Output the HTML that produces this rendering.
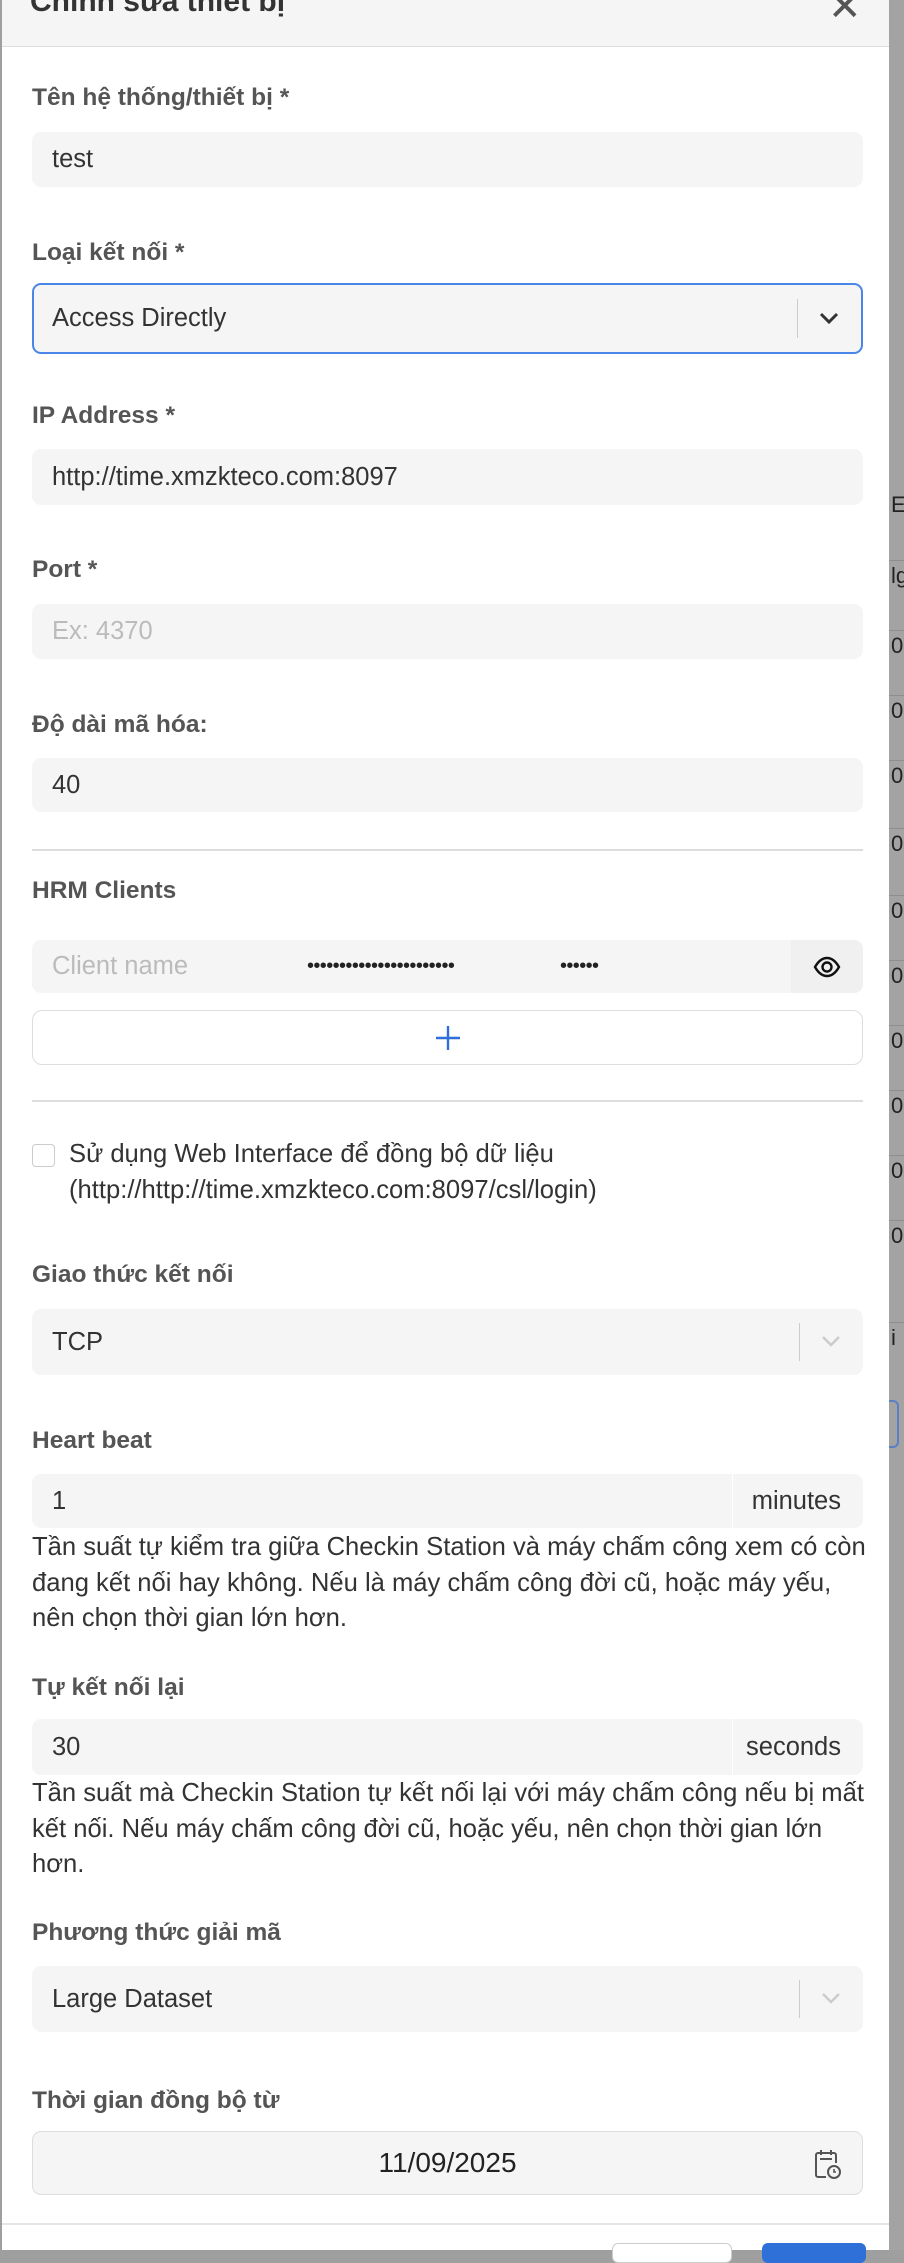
<!DOCTYPE html>
<html><head><meta charset="utf-8"><style>
*{box-sizing:border-box;margin:0;padding:0}
body{width:904px;height:2250px;overflow:hidden;background:#9f9f9f;font-family:"Liberation Sans",Arial,sans-serif;position:relative}
.strip{position:absolute;left:889px;top:0;width:15px;height:2250px;background:#a3a3a3}
.strip div{position:absolute;left:0;width:15px;border-top:1px solid #8e8e8e;color:#222;font-size:22px;line-height:30px;padding-left:2px}
.modal{position:absolute;left:2px;top:0;width:887px;height:2250px;background:#fff}
.hdr{position:absolute;left:0;top:0;width:887px;height:47px;background:#f5f5f5;border-bottom:1px solid #ddd}
.hdr .t{position:absolute;left:28px;top:-15px;font-size:30px;font-weight:bold;color:#333}
.hdr .x{position:absolute;left:826px;top:-16px;font-size:40px;color:#555;font-weight:300}
.lbl{position:absolute;left:30px;font-size:24.5px;font-weight:bold;color:#555;transform:translateY(-50%)}
.inp{position:absolute;left:30px;width:831px;background:#f5f5f5;border-radius:9px;font-size:25.5px;color:#333;padding-left:20px;display:flex;align-items:center}
.sep{position:absolute;right:63px;top:14px;bottom:14px;width:1px;background:#ccc}
.chev{position:absolute;right:22px;top:50%;margin-top:-8px}
.help{position:absolute;left:30px;font-size:25.6px;color:#333;line-height:35.5px;width:850px}
.hr{position:absolute;left:30px;width:831px;height:2px;background:#ddd}
.addon{position:absolute;right:0;top:0;bottom:0;width:131px;border-left:1px solid #fff;display:flex;align-items:center;justify-content:flex-end;padding-right:22px}
</style></head><body>
<div class="strip">
<div style="top:490px;border:none">E</div>
<div style="top:560px">lg</div>
<div style="top:630px">0</div><div style="top:695px">0</div><div style="top:760px">0</div><div style="top:828px">0</div><div style="top:895px">0</div><div style="top:960px">0</div><div style="top:1025px">0</div><div style="top:1090px">0</div><div style="top:1155px">0</div><div style="top:1220px">0</div>
<div style="top:1322px">i</div>
<div style="top:1400px;height:48px;border:2px solid #5b7ec4;border-left:none;width:10px;border-radius:0 6px 6px 0"></div>
</div>
<div class="modal">
<div class="hdr"><div class="t">Chỉnh sửa thiết bị</div><div class="x">✕</div></div>

<div class="lbl" style="top:98px">Tên hệ thống/thiết bị *</div>
<div class="inp" style="top:132px;height:55px">test</div>

<div class="lbl" style="top:253px">Loại kết nối *</div>
<div class="inp" style="top:283px;height:71px;border:2px solid #4a86e8;padding-left:18px">Access Directly<div class="sep"></div>
<svg class="chev" width="20" height="14" viewBox="0 0 20 14"><path d="M2 3l8 8 8-8" fill="none" stroke="#333" stroke-width="3"/></svg></div>

<div class="lbl" style="top:416px">IP Address *</div>
<div class="inp" style="top:449px;height:56px">http://time.xmzkteco.com:8097</div>

<div class="lbl" style="top:570px">Port *</div>
<div class="inp" style="top:604px;height:55px;color:#bbb">Ex: 4370</div>

<div class="lbl" style="top:725px">Độ dài mã hóa:</div>
<div class="inp" style="top:758px;height:54px">40</div>

<div class="hr" style="top:849px"></div>
<div class="lbl" style="top:891px">HRM Clients</div>
<div class="inp" style="top:940px;height:53px;color:#bbb">Client name
<span style="position:absolute;left:275px;color:#222;font-size:20px;letter-spacing:-0.6px">•••••••••••••••••••••••</span>
<span style="position:absolute;left:528px;color:#222;font-size:20px;letter-spacing:-0.6px">••••••</span>
<div style="position:absolute;right:0;top:0;bottom:0;width:72px;background:#f0f0f0;border-radius:0 9px 9px 0"></div>
<svg style="position:absolute;right:22px;top:16px" width="28" height="22" viewBox="0 0 28 22"><path d="M2 11C6 4 10 2 14 2s8 2 12 9c-4 7-8 9-12 9S6 18 2 11z" fill="none" stroke="#111" stroke-width="2.4"/><circle cx="14" cy="11" r="4.5" fill="none" stroke="#111" stroke-width="2.4"/></svg></div>
<div style="position:absolute;left:30px;top:1010px;width:831px;height:55px;border:1.5px solid #ddd;border-radius:10px;background:#fff">
<svg style="position:absolute;left:403px;top:15px" width="24" height="24" viewBox="0 0 24 24"><path d="M12 0v24M0 12h24" stroke="#2f6fd8" stroke-width="2.4"/></svg></div>
<div class="hr" style="top:1100px"></div>

<div style="position:absolute;left:30px;top:1144px;width:23px;height:23px;border:1.5px solid #ccc;border-radius:4px"></div>
<div class="help" style="left:67px;top:1136px;line-height:36px">Sử dụng Web Interface để đồng bộ dữ liệu<br>(http://http://time.xmzkteco.com:8097/csl/login)</div>

<div class="lbl" style="top:1275px">Giao thức kết nối</div>
<div class="inp" style="top:1309px;height:66px">TCP<div class="sep"></div>
<svg class="chev" width="20" height="14" viewBox="0 0 20 14"><path d="M2 3l8 8 8-8" fill="none" stroke="#ccc" stroke-width="2.5"/></svg></div>

<div class="lbl" style="top:1441px">Heart beat</div>
<div class="inp" style="top:1474px;height:54px">1<div class="addon">minutes</div></div>
<div class="help" style="top:1530px">Tần suất tự kiểm tra giữa Checkin Station và máy chấm công xem có còn<br>đang kết nối hay không. Nếu là máy chấm công đời cũ, hoặc máy yếu,<br>nên chọn thời gian lớn hơn.</div>

<div class="lbl" style="top:1688px">Tự kết nối lại</div>
<div class="inp" style="top:1719px;height:56px">30<div class="addon">seconds</div></div>
<div class="help" style="top:1776px">Tần suất mà Checkin Station tự kết nối lại với máy chấm công nếu bị mất<br>kết nối. Nếu máy chấm công đời cũ, hoặc yếu, nên chọn thời gian lớn<br>hơn.</div>

<div class="lbl" style="top:1933px">Phương thức giải mã</div>
<div class="inp" style="top:1966px;height:66px">Large Dataset<div class="sep"></div>
<svg class="chev" width="20" height="14" viewBox="0 0 20 14"><path d="M2 3l8 8 8-8" fill="none" stroke="#ccc" stroke-width="2.5"/></svg></div>

<div class="lbl" style="top:2101px">Thời gian đồng bộ từ</div>
<div class="inp" style="top:2131px;height:64px;border:1.5px solid #ddd;justify-content:center;padding:0;color:#222;font-size:28px">11/09/2025
<svg style="position:absolute;right:20px;top:16px" width="28" height="32" viewBox="0 0 28 32"><path d="M4 5h16a2 2 0 0 1 2 2v8M12 29H4a2 2 0 0 1-2-2V7a2 2 0 0 1 2-2M7 2v5M17 2v5M6 11h12" fill="none" stroke="#555" stroke-width="2"/><circle cx="20" cy="24" r="6" fill="none" stroke="#555" stroke-width="2"/><path d="M20 21v3h2" fill="none" stroke="#555" stroke-width="1.6"/></svg></div>

<div style="position:absolute;left:0;top:2223px;width:887px;height:2px;background:#e5e5e5"></div>
<div style="position:absolute;left:610px;top:2243px;width:120px;height:20px;border:1.5px solid #ccc;border-radius:6px;background:#fff"></div>
<div style="position:absolute;left:760px;top:2243px;width:104px;height:20px;border-radius:6px;background:#2f6fd8"></div>
</div>
</body></html>
